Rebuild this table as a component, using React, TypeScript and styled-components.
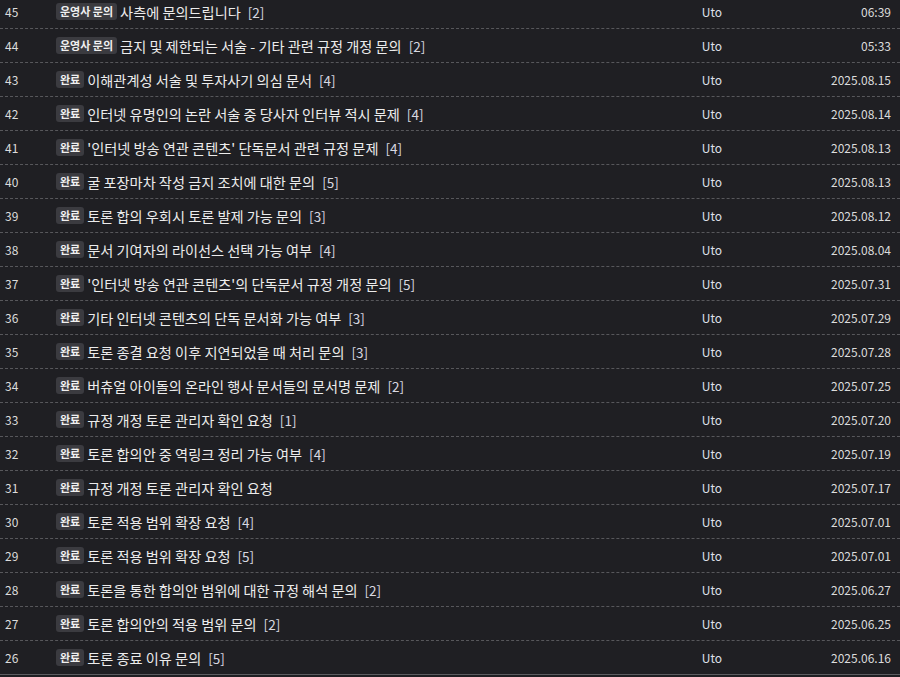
import React from "react";
import styled, { createGlobalStyle } from "styled-components";

const GlobalStyle = createGlobalStyle`
  html, body { margin: 0; padding: 0; background: #1f1f23; }
  body { font-family: "Noto Sans CJK KR", "Noto Sans", sans-serif; color: #e6e6e6; overflow: hidden; }
`;

type Item = { no: number; tag: "op" | "done"; title: string; count?: number; author: string; date: string };

const items: Item[] = [
  { no: 45, tag: "op", title: "사측에 문의드립니다", count: 2, author: "Uto", date: "06:39" },
  { no: 44, tag: "op", title: "금지 및 제한되는 서술 - 기타 관련 규정 개정 문의", count: 2, author: "Uto", date: "05:33" },
  { no: 43, tag: "done", title: "이해관계성 서술 및 투자사기 의심 문서", count: 4, author: "Uto", date: "2025.08.15" },
  { no: 42, tag: "done", title: "인터넷 유명인의 논란 서술 중 당사자 인터뷰 적시 문제", count: 4, author: "Uto", date: "2025.08.14" },
  { no: 41, tag: "done", title: "'인터넷 방송 연관 콘텐츠' 단독문서 관련 규정 문제", count: 4, author: "Uto", date: "2025.08.13" },
  { no: 40, tag: "done", title: "굴 포장마차 작성 금지 조치에 대한 문의", count: 5, author: "Uto", date: "2025.08.13" },
  { no: 39, tag: "done", title: "토론 합의 우회시 토론 발제 가능 문의", count: 3, author: "Uto", date: "2025.08.12" },
  { no: 38, tag: "done", title: "문서 기여자의 라이선스 선택 가능 여부", count: 4, author: "Uto", date: "2025.08.04" },
  { no: 37, tag: "done", title: "'인터넷 방송 연관 콘텐츠'의 단독문서 규정 개정 문의", count: 5, author: "Uto", date: "2025.07.31" },
  { no: 36, tag: "done", title: "기타 인터넷 콘텐츠의 단독 문서화 가능 여부", count: 3, author: "Uto", date: "2025.07.29" },
  { no: 35, tag: "done", title: "토론 종결 요청 이후 지연되었을 때 처리 문의", count: 3, author: "Uto", date: "2025.07.28" },
  { no: 34, tag: "done", title: "버츄얼 아이돌의 온라인 행사 문서들의 문서명 문제", count: 2, author: "Uto", date: "2025.07.25" },
  { no: 33, tag: "done", title: "규정 개정 토론 관리자 확인 요청", count: 1, author: "Uto", date: "2025.07.20" },
  { no: 32, tag: "done", title: "토론 합의안 중 역링크 정리 가능 여부", count: 4, author: "Uto", date: "2025.07.19" },
  { no: 31, tag: "done", title: "규정 개정 토론 관리자 확인 요청", author: "Uto", date: "2025.07.17" },
  { no: 30, tag: "done", title: "토론 적용 범위 확장 요청", count: 4, author: "Uto", date: "2025.07.01" },
  { no: 29, tag: "done", title: "토론 적용 범위 확장 요청", count: 5, author: "Uto", date: "2025.07.01" },
  { no: 28, tag: "done", title: "토론을 통한 합의안 범위에 대한 규정 해석 문의", count: 2, author: "Uto", date: "2025.06.27" },
  { no: 27, tag: "done", title: "토론 합의안의 적용 범위 문의", count: 2, author: "Uto", date: "2025.06.25" },
  { no: 26, tag: "done", title: "토론 종료 이유 문의", count: 5, author: "Uto", date: "2025.06.16" },
];

const List = styled.div`
  margin-top: -5px;
  display: flex;
  flex-direction: column;
`;

const Row = styled.div<{ $last?: boolean }>`
  display: grid;
  grid-template-columns: 56px 1fr 120px 128px;
  align-items: center;
  height: 33px;
  border-bottom: 1px ${(p) => (p.$last ? "solid #5c5c60" : "dashed #57575b")};
`;

const No = styled.div`
  padding-left: 5px;
  font-size: 12px;
  color: #dcdcdc;
`;

const TitleCell = styled.div`
  display: flex;
  align-items: center;
  gap: 3px;
  min-width: 0;
  white-space: nowrap;
`;

const Badge = styled.span`
  display: inline-flex;
  align-items: center;
  height: 17px;
  padding: 0 4px;
  border-radius: 3px;
  background: #3b3b40;
  color: #f0f0f0;
  font-size: 11px;
  font-weight: 700;
  line-height: 1;
`;

const Title = styled.span`
  font-size: 14.2px;
  color: #ececec;
`;

const Count = styled.span`
  margin-left: 4px;
  font-size: 13.5px;
  color: #d8d8e0;
`;

const Author = styled.div`
  text-align: center;
  font-size: 12px;
  color: #dfe0ea;
`;

const DateCell = styled.div`
  text-align: right;
  padding-right: 9px;
  font-size: 12px;
  color: #dcdcdc;
`;

export default function App() {
  return (
    <>
      <GlobalStyle />
      <List>
        {items.map((it, i) => (
          <Row key={it.no} $last={i === items.length - 1}>
            <No>{it.no}</No>
            <TitleCell>
              <Badge>{it.tag === "op" ? "운영사 문의" : "완료"}</Badge>
              <Title>{it.title}</Title>
              {it.count !== undefined && <Count>[{it.count}]</Count>}
            </TitleCell>
            <Author>{it.author}</Author>
            <DateCell>{it.date}</DateCell>
          </Row>
        ))}
      </List>
    </>
  );
}
